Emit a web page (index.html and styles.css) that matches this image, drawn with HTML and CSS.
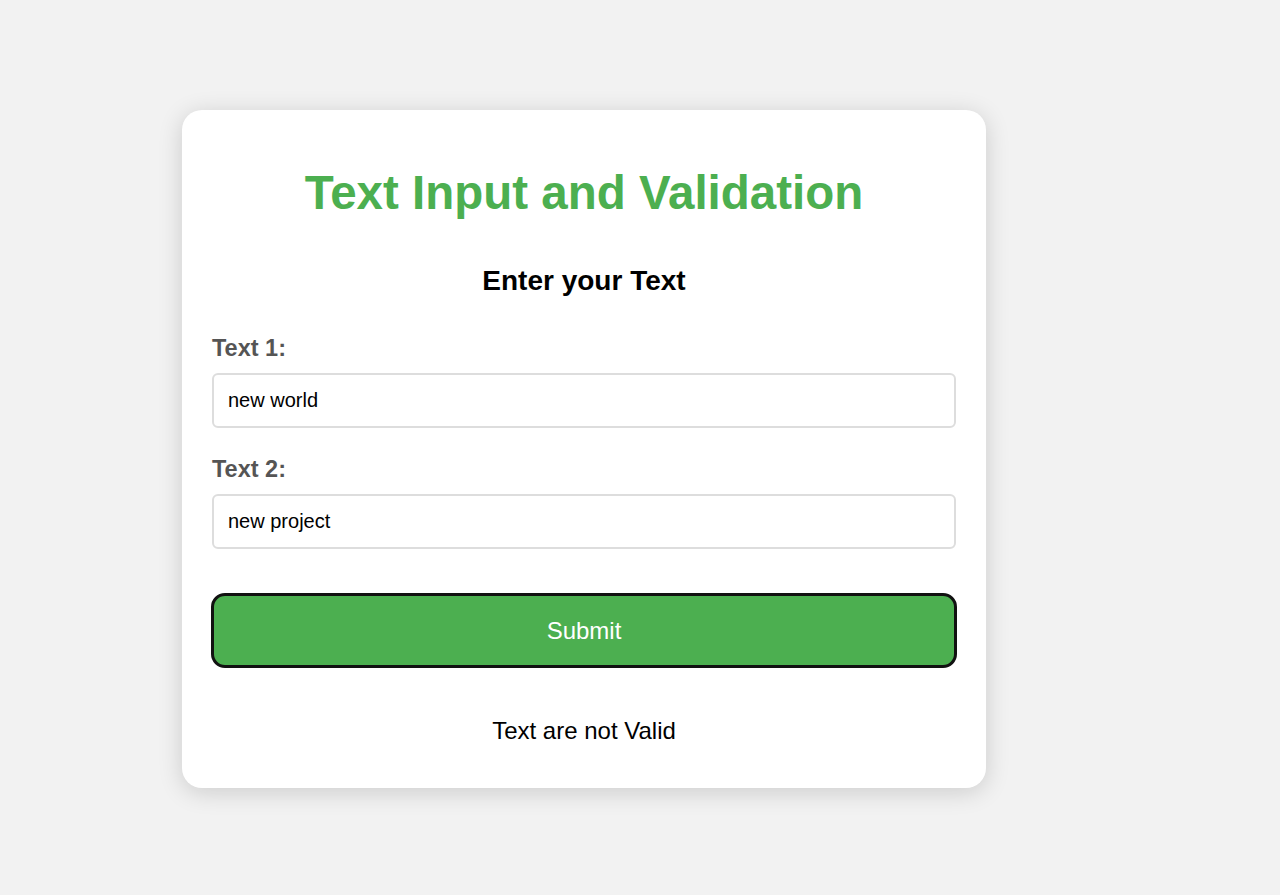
FILE: index.html
```html
<!DOCTYPE html>
<html>
<head>
<meta charset="utf-8">
<link rel="stylesheet" href="styles.css">
</head>
<body>
<div class="card">
  <h1 class="title">Text Input and Validation</h1>
  <h2 class="subtitle">Enter your Text</h2>
  <div class="field">
    <label class="label">Text 1:</label>
    <input class="input" type="text" value="new world">
  </div>
  <div class="field">
    <label class="label">Text 2:</label>
    <input class="input" type="text" value="new project">
  </div>
  <button class="submit">Submit</button>
  <p class="result">Text are not Valid</p>
</div>
</body>
</html>
```
FILE: styles.css
```css
html, body {
  margin: 0;
  padding: 0;
  background: #f2f2f2;
  font-family: "Liberation Sans", Arial, sans-serif;
}
body {
  padding-top: 110px;
  padding-left: 182px;
  box-sizing: border-box;
  min-height: 895px;
}
.card {
  width: 804px;
  box-sizing: border-box;
  background: #fff;
  border-radius: 20px;
  box-shadow: 0 4px 24px rgba(0,0,0,0.16);
  padding: 53px 29px 43px 29px;
  display: flex;
  flex-direction: column;
}
.title {
  margin: 0;
  text-align: center;
  color: #4caf50;
  font-size: 47.5px;
  font-weight: bold;
  line-height: 60px;
}
.subtitle {
  margin: 41px 0 0 0;
  text-align: center;
  font-size: 28px;
  line-height: 34px;
  color: #000;
}
.field {
  display: flex;
  flex-direction: column;
}
.label {
  font-size: 23.5px;
  font-weight: bold;
  color: #555;
  line-height: 28px;
  margin: 36px 1px 11px 1px;
}
.field + .field .label { margin-top: 27px; }
.input {
  margin: 0 1px;
  height: 55px;
  box-sizing: border-box;
  border: 2px solid #ddd;
  border-radius: 6px;
  padding: 0 14px;
  font-family: "Liberation Sans", Arial, sans-serif;
  font-size: 20px;
  color: #000;
  background: #fff;
  outline: none;
}
.submit {
  margin-top: 44px;
  height: 75px;
  background: #4caf50;
  border: 3px solid #111;
  border-radius: 14px;
  color: #fff;
  font-family: "Liberation Sans", Arial, sans-serif;
  font-size: 24px;
}
.result {
  margin: 49px 0 0 0;
  text-align: center;
  font-size: 24px;
  line-height: 28px;
  color: #000;
}
```
